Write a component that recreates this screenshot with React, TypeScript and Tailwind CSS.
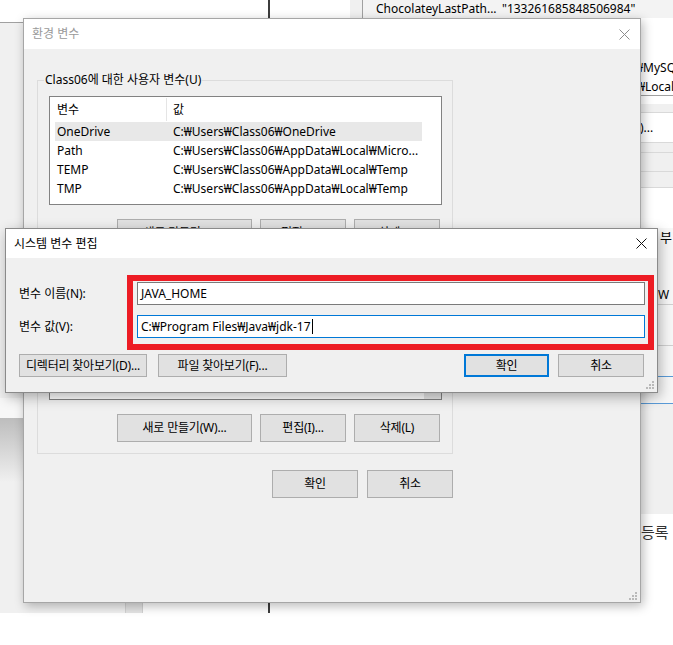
import React from "react";

const USER_ROWS: [string, string][] = [
  ["OneDrive", "C:₩Users₩Class06₩OneDrive"],
  ["Path", "C:₩Users₩Class06₩AppData₩Local₩Micro..."],
  ["TEMP", "C:₩Users₩Class06₩AppData₩Local₩Temp"],
  ["TMP", "C:₩Users₩Class06₩AppData₩Local₩Temp"],
];

const SYSTEM_ROWS: [string, string][] = [
  ["ComSpec", "C:₩Windows₩system32₩cmd.exe"],
  ["DriverData", "C:₩Windows₩System32₩Drivers₩DriverData"],
  ["NUMBER_OF_PROCESSORS", "8"],
  ["OS", "Windows_NT"],
];

const CloseIcon = ({ color }: { color: string }) => (
  <svg width="11" height="11" viewBox="0 0 11 11" className="block">
    <path d="M0.5 0.5 L10.5 10.5 M10.5 0.5 L0.5 10.5" stroke={color} strokeWidth="1" />
  </svg>
);

const Grip = () => (
  <svg width="8" height="8" viewBox="0 0 8 8" className="block">
    {[
      [6, 0],
      [3, 3],
      [6, 3],
      [0, 6],
      [3, 6],
      [6, 6],
    ].map(([x, y], i) => (
      <rect key={i} x={x} y={y} width="2" height="2" fill="#b9b9b9" />
    ))}
  </svg>
);

const Btn = ({ label, className, primary }: { label: string; className: string; primary?: boolean }) => (
  <div
    className={`flex items-center justify-center overflow-hidden bg-[#e1e1e1] whitespace-nowrap tracking-[-0.2px] ${
      primary ? "border-2 border-[#0078d7]" : "border border-[#adadad]"
    } ${className}`}
  >
    {label}
  </div>
);

const ListView = ({ rows, heightClass, scroll }: { rows: [string, string][]; heightClass: string; scroll?: boolean }) => (
  <div className={`flex w-[393px] border border-[#828282] bg-white ${heightClass}`}>
    <div className="flex-1 pl-[5px] overflow-hidden">
      <div className="flex h-[25px] items-center">
        <div className="w-[112px] h-[23px] pl-[2px] flex items-center border-r border-[#e5e5e5]">변수</div>
        <div className="w-[255px] pl-[6px]">값</div>
      </div>
      {rows.map(([name, value], i) => (
        <div
          key={name}
          className={`flex h-[19px] w-[367px] items-center whitespace-nowrap ${
            i === 0 && !scroll ? "bg-[#e8e8e8]" : ""
          }`}
        >
          <div className="w-[112px] pl-[2px] overflow-hidden">{name}</div>
          <div className="w-[255px] pl-[6px] overflow-hidden">{value}</div>
        </div>
      ))}
    </div>
    {scroll && (
      <div className="w-[17px] bg-[#f0f0f0] flex flex-col justify-end">
        <div className="h-[17px] bg-[#e6e6e6]" />
      </div>
    )}
  </div>
);

const GroupBox = ({
  label,
  rows,
  heightClass,
  buttons,
  scroll,
}: {
  label: string;
  rows: [string, string][];
  heightClass: string;
  buttons: [string, string, string];
  scroll?: boolean;
}) => (
  <div className="relative w-[416px] border border-[#dcdcdc] pl-[11px] pr-[10px] pt-[15px] pb-[11px]">
    <span className="absolute left-[6px] -top-[9px] px-[1px] bg-[#f0f0f0] leading-[16px]">{label}</span>
    <ListView rows={rows} heightClass={heightClass} scroll={scroll} />
    <div className="mt-[14px] flex justify-end gap-[8px] pr-[2px]">
      <Btn className="w-[135px] h-[28px]" label={buttons[0]} />
      <Btn className="w-[86px] h-[28px]" label={buttons[1]} />
      <Btn className="w-[86px] h-[28px]" label={buttons[2]} />
    </div>
  </div>
);

const Desktop = () => (
  <div className="absolute left-0 top-0 w-[673px] h-[613px] bg-[#f0f0f0] overflow-hidden">
    {/* left window */}
    <div className="absolute left-0 top-0 w-[268px] h-[23px] bg-white border-b border-[#a0a0a0]" />
    <div className="absolute left-0 top-[398px] w-[23px] h-[20px] bg-[#f7f7f7]" />
    <div className="absolute left-0 top-[418px] w-[23px] h-[64px] bg-gradient-to-b from-[#bdbdbd] to-[#f0f0f0]" />
    <div className="absolute left-[125px] top-[595px] w-[18px] h-[18px] bg-[#e4e4e4] border-x border-[#d2d2d2]" />
    <div className="absolute left-[143px] top-[595px] w-[125px] h-[18px] bg-white" />
    <div className="absolute left-[268px] top-0 w-[2px] h-[613px] bg-[#3c3c3c]" />
    <div className="absolute left-[270px] top-0 w-[80px] h-[18px] bg-white" />
    <div className="absolute left-[270px] top-[595px] w-[403px] h-[18px] bg-white" />

    {/* registry-like window */}
    <div className="absolute left-[362px] top-0 w-[311px] h-[18px] border-l border-[#a0a0a0] bg-[#f3f3f3] flex items-center pl-[13px] whitespace-nowrap">
      <span className="w-[126px]">ChocolateyLastPath...</span>
      <span>"133261685848506984"</span>
    </div>
    <div className="absolute left-[635px] top-[18px] w-[38px] h-[210px] bg-white flex flex-col whitespace-nowrap overflow-hidden">
      <div className="mt-[40px] h-[19px] leading-[19px]">₩MySQL</div>
      <div className="h-[19px] leading-[19px] pl-[2px] border-b border-[#a0a0a0]">₩Local</div>
      <div className="mt-[8px] h-[9px] bg-[#f0f0f0] border-b border-[#d9d9d9]" />
      <div className="h-[29px] flex items-center pl-[5px]">)...</div>
      <div className="h-[11px] bg-[#f0f0f0] border-y border-[#d9d9d9]" />
      <div className="h-[19px] bg-[#f0f0f0] border-b border-[#d9d9d9]" />
      <div className="h-[16px] bg-[#f0f0f0] border-b border-[#d9d9d9]" />
    </div>
    <div className="absolute left-[641px] top-[228px] w-[32px] h-[176px] bg-[#f7f7f7] flex flex-col whitespace-nowrap overflow-hidden">
      <div className="h-[18px] pl-[19px] leading-[18px] text-[13px]">부</div>
      <div className="mt-[40px] h-[18px] pl-[17px] leading-[18px]">W</div>
      <div className="h-[1px] bg-[#d0d0d0]" />
      <div className="mt-[40px] h-[1px] bg-[#d0d0d0]" />
      <div className="mt-[30px] h-[1px] bg-[#5a9bd8]" />
      <div className="h-[27px] leading-[27px] text-[13px]">ㄷ</div>
      <div className="h-[1px] bg-[#5a9bd8]" />
    </div>
    <div className="absolute left-[641px] top-[514px] w-[32px] h-[99px] bg-white flex flex-col whitespace-nowrap overflow-hidden">
      <div className="mt-[8px] text-[15px] leading-[20px] text-[#333333]">등록</div>
    </div>
  </div>
);

const EnvDialog = () => (
  <div className="absolute left-[23px] top-[18px] w-[618px] h-[585px] border border-[#a6a6a6] bg-[#f0f0f0] shadow-[2px_3px_10px_rgba(0,0,0,0.28)] flex flex-col">
    <div className="h-[30px] shrink-0 bg-white flex items-center justify-between pl-[8px] pr-[10px]">
      <span className="text-[#9a9a9a]">환경 변수</span>
      <CloseIcon color="#8c8c8c" />
    </div>
    <div className="relative flex-1 pl-[13px] pt-[31px]">
      <GroupBox
        label="Class06에 대한 사용자 변수(U)"
        rows={USER_ROWS}
        heightClass="h-[109px]"
        buttons={["새로 만들기(N)...", "편집(E)...", "삭제(D)"]}
      />
      <div className="mt-[13px]">
        <GroupBox
          label="시스템 변수(S)"
          rows={SYSTEM_ROWS}
          heightClass="h-[112px]"
          buttons={["새로 만들기(W)...", "편집(I)...", "삭제(L)"]}
          scroll
        />
      </div>
      <div className="mt-[16px] w-[416px] flex justify-end gap-[9px]">
        <Btn className="w-[86px] h-[28px]" label="확인" />
        <Btn className="w-[86px] h-[28px]" label="취소" />
      </div>
      <div className="absolute right-[3px] bottom-[2px]">
        <Grip />
      </div>
    </div>
  </div>
);

const EditDialog = () => (
  <div className="absolute left-[5px] top-[228px] w-[653px] h-[165px] border border-[#8a8a8a] bg-[#f0f0f0] shadow-[2px_4px_12px_rgba(0,0,0,0.3)] flex flex-col">
    <div className="h-[29px] shrink-0 bg-white flex items-center justify-between pl-[8px] pr-[10px]">
      <span>시스템 변수 편집</span>
      <CloseIcon color="#111111" />
    </div>
    <div className="relative flex-1 pl-[13px] pr-[12px] pt-[24px]">
      <div className="flex items-center h-[23px]">
        <span className="w-[118px]">변수 이름(N):</span>
        <div className="w-[508px] h-[23px] border border-[#7a7a7a] bg-white flex items-center pl-[3px]">JAVA_HOME</div>
      </div>
      <div className="mt-[10px] flex items-center h-[23px]">
        <span className="w-[118px]">변수 값(V):</span>
        <div className="w-[508px] h-[23px] border border-[#0078d7] bg-white flex items-center pl-[3px] whitespace-nowrap">
          <span>C:₩Program Files₩Java₩jdk-17</span>
          <span className="ml-[1px] inline-block w-px h-[15px] bg-black" />
        </div>
      </div>
      <div className="mt-[16px] flex pr-[1px]">
        <Btn className="w-[128px] h-[23px]" label="디렉터리 찾아보기(D)..." />
        <Btn className="ml-[11px] w-[129px] h-[23px]" label="파일 찾아보기(F)..." />
        <Btn className="ml-auto w-[85px] h-[23px]" label="확인" primary />
        <Btn className="ml-[9px] w-[86px] h-[23px]" label="취소" />
      </div>
      <div className="absolute right-[3px] bottom-[3px]">
        <Grip />
      </div>
    </div>
  </div>
);

export default function App() {
  return (
    <div className="relative w-[673px] h-[645px] overflow-hidden bg-white text-[12px] leading-[16px] text-black font-['Noto_Sans','Noto_Sans_CJK_KR',sans-serif]">
      <Desktop />
      <EnvDialog />
      <EditDialog />
      <div className="absolute left-[127px] top-[275px] w-[527px] h-[75px] border-[6px] border-[#ed1c24]" />
    </div>
  );
}
